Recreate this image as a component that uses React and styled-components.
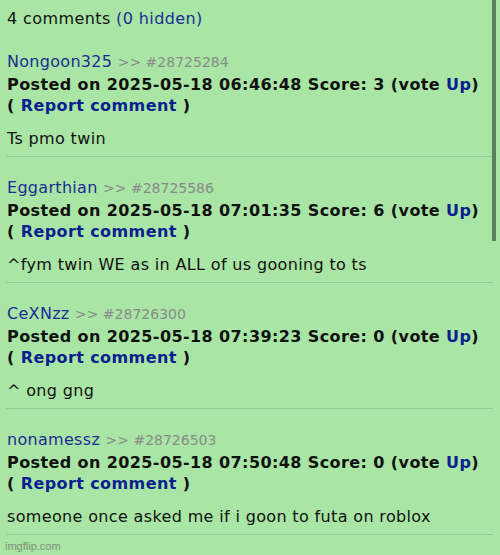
import React from "react";
import styled, { createGlobalStyle } from "styled-components";

const GlobalStyle = createGlobalStyle`
  html, body {
    margin: 0;
    padding: 0;
    background: #a9e5a4;
  }
  body {
    font-family: "DejaVu Sans", Verdana, sans-serif;
    width: 500px;
    height: 555px;
    overflow: hidden;
  }
`;

const Page = styled.div`
  position: relative;
  width: 500px;
  height: 555px;
  background: #a9e5a4;
  overflow: hidden;
`;

const Content = styled.div`
  width: 487px;
  padding: 8px 0 0 6px;
`;

const Count = styled.div`
  font-size: 16px;
  letter-spacing: 0.4px;
  line-height: 22px;
  color: #111;
  padding-left: 1px;
  margin-bottom: 21px;
`;

const Hidden = styled.span`
  color: #1b2d95;
`;

const Comment = styled.div`
  padding: 0 0 6.5px 1px;
  border-bottom: 1px solid #94cc8f;
  margin-bottom: 20px;
`;

const Head = styled.div`
  font-size: 16px;
  letter-spacing: 0.3px;
  line-height: 21.5px;
`;

const User = styled.span`
  color: #1b2d95;
`;

const Id = styled.span`
  color: #8a8a8a;
  font-size: 14px;
  letter-spacing: 0;
`;

const Meta = styled.div`
  font-size: 16px;
  letter-spacing: 0.4px;
  line-height: 21.5px;
  font-weight: bold;
  color: #111;
`;

const Link = styled.span`
  color: #0b1f8f;
`;

const Body = styled.div`
  font-size: 16px;
  letter-spacing: 0.35px;
  line-height: 22px;
  color: #111;
  margin-top: 11px;
`;

const Scrollbar = styled.div`
  position: absolute;
  top: 0;
  right: 4px;
  width: 4px;
  height: 241px;
  background: #5d7f5c;
`;

const Watermark = styled.div`
  position: absolute;
  left: 5px;
  bottom: 3px;
  font-family: "Liberation Sans", Arial, sans-serif;
  font-size: 11px;
  color: #7d8f7b;
`;

const comments = [
  { user: "Nongoon325", id: "28725284", time: "06:46:48", score: 3, text: "Ts pmo twin" },
  { user: "Eggarthian", id: "28725586", time: "07:01:35", score: 6, text: "^fym twin WE as in ALL of us gooning to ts" },
  { user: "CeXNzz", id: "28726300", time: "07:39:23", score: 0, text: "^ ong gng" },
  { user: "nonamessz", id: "28726503", time: "07:50:48", score: 0, text: "someone once asked me if i goon to futa on roblox" },
];

export default function App() {
  return (
    <Page>
      <GlobalStyle />
      <Content>
        <Count>
          4 comments <Hidden>(0 hidden)</Hidden>
        </Count>
        {comments.map((c) => (
          <Comment key={c.id}>
            <Head>
              <User>{c.user}</User> <Id>&gt;&gt; #{c.id}</Id>
            </Head>
            <Meta>
              Posted on 2025-05-18 {c.time} Score: {c.score} (vote <Link>Up</Link>)
            </Meta>
            <Meta>
              ( <Link>Report comment</Link> )
            </Meta>
            <Body>{c.text}</Body>
          </Comment>
        ))}
      </Content>
      <Scrollbar />
      <Watermark>imgflip.com</Watermark>
    </Page>
  );
}
